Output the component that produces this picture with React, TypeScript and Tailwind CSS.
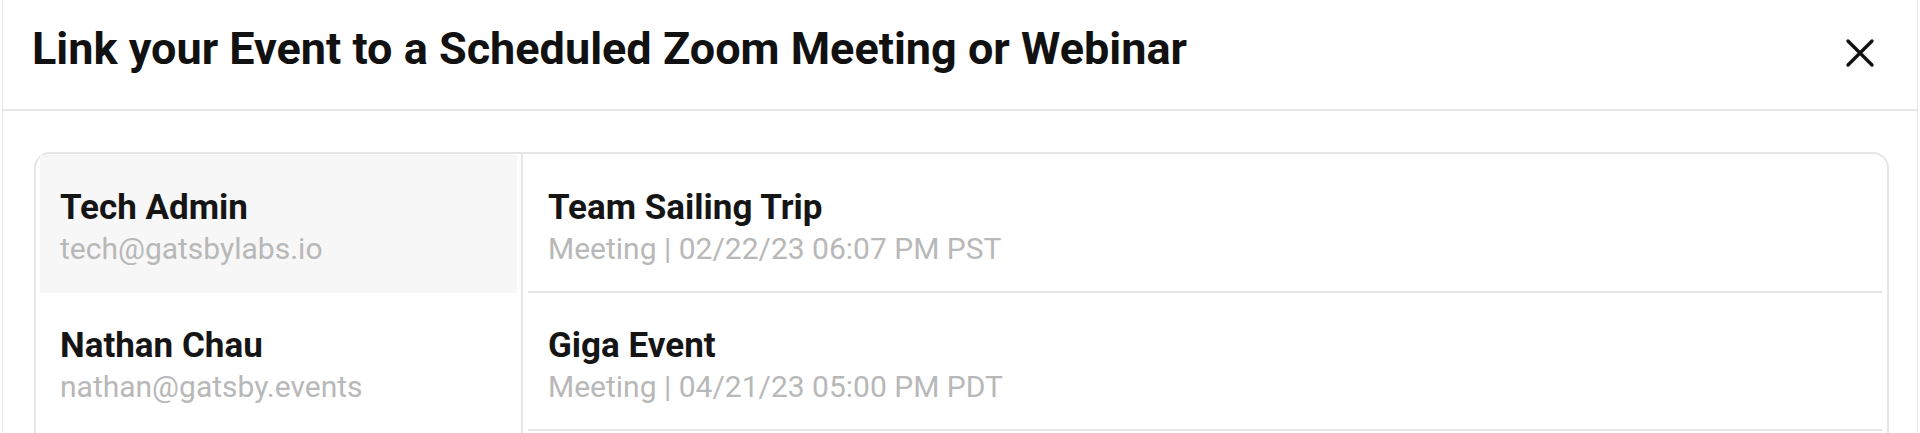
import React from "react";

type Account = { name: string; email: string; selected?: boolean };
type Meeting = { title: string; meta: string };

const accounts: Account[] = [
  { name: "Tech Admin", email: "tech@gatsbylabs.io", selected: true },
  { name: "Nathan Chau", email: "nathan@gatsby.events" },
];

const meetings: Meeting[] = [
  { title: "Team Sailing Trip", meta: "Meeting | 02/22/23 06:07 PM PST" },
  { title: "Giga Event", meta: "Meeting | 04/21/23 05:00 PM PDT" },
];

function CloseIcon() {
  return (
    <svg width="30" height="30" viewBox="0 0 30 30" fill="none" aria-hidden="true">
      <path d="M3 3L27 27M27 3L3 27" stroke="#111111" strokeWidth="3.4" strokeLinecap="round" />
    </svg>
  );
}

export default function App() {
  return (
    <div className="min-h-[433px] bg-white px-[2px] font-['Roboto','Liberation_Sans',sans-serif]">
      <div className="h-[433px] overflow-hidden border-x border-[#e6e6e6] bg-white">
        <div className="flex h-[111px] items-start justify-between border-b-2 border-[#e6e6e6] pl-[29px] pr-[42px] pt-[23px]">
          <h1 className="text-[45px] font-bold leading-[52px] text-[#111111]">
            Link your Event to a Scheduled Zoom Meeting or Webinar
          </h1>
          <button className="mt-[15px]" aria-label="Close">
            <CloseIcon />
          </button>
        </div>
        <div className="pl-[31px] pr-[28px] pt-[41px]">
          <div className="flex h-[320px] rounded-[16px] border-2 border-[#e6e6e6]">
            <div className="w-[485px] shrink-0 px-[4px] pt-[1px]">
              {accounts.map((a) => (
                <div
                  key={a.email}
                  className={`h-[138px] pl-[20px] pt-[33px] ${a.selected ? "bg-[#f7f7f7]" : "bg-white"}`}
                >
                  <div className="text-[35px] font-bold leading-[40px] text-[#151515]">{a.name}</div>
                  <div className="mt-[4px] text-[30px] leading-[34px] text-[#b8b8b8]">{a.email}</div>
                </div>
              ))}
            </div>
            <div className="flex-1 border-l-2 border-[#e6e6e6] px-[5px] pt-[1px]">
              {meetings.map((m) => (
                <div key={m.title} className="h-[138px] border-b-2 border-[#e6e6e6] pl-[20px] pt-[33px]">
                  <div className="text-[35px] font-bold leading-[40px] text-[#151515]">{m.title}</div>
                  <div className="mt-[4px] text-[30px] leading-[34px] text-[#b8b8b8]">{m.meta}</div>
                </div>
              ))}
            </div>
          </div>
        </div>
      </div>
    </div>
  );
}
